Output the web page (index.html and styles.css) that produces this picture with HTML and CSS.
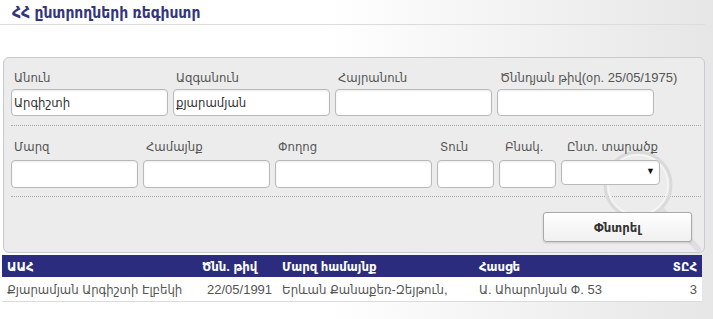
FILE: index.html
```html
<!DOCTYPE html>
<html lang="hy">
<head>
    <meta charset="UTF-8">
    <meta name="viewport" content="width=device-width, initial-scale=1.0">
    <title>ՀՀ ընտրողների ռեգիստր</title>
    <link rel="stylesheet" href="styles.css">
</head>
<body>
    <!-- Title -->
    <div class="page-title">ՀՀ ընտրողների ռեգիստր</div>

    <!-- Search form -->
    <form class="search-panel" id="search-form">
        <svg class="magnifier" width="120" height="130" viewBox="0 0 120 130">
            <circle cx="40" cy="40" r="33" fill="none" stroke="#dadada" stroke-width="3"/>
            <circle cx="40" cy="40" r="30" fill="none" stroke="#f6f6f6" stroke-width="1.5"/>
            <line x1="64" y1="65" x2="100" y2="104" stroke="#dedede" stroke-width="6" stroke-linecap="round"/>
        </svg>

        <div class="field-row">
            <div class="field w157">
                <label for="firstName">Անուն</label>
                <input type="text" id="firstName" value="Արգիշտի">
            </div>
            <div class="field w157">
                <label for="lastName">Ազգանուն</label>
                <input type="text" id="lastName" value="քյարամյան">
            </div>
            <div class="field w157">
                <label for="middleName">Հայրանուն</label>
                <input type="text" id="middleName">
            </div>
            <div class="field w157">
                <label for="birthDate">Ծննդյան թիվ(օր. 25/05/1975)</label>
                <input type="text" id="birthDate">
            </div>
        </div>

        <div class="field-row second">
            <div class="field w127">
                <label for="region">Մարզ</label>
                <input type="text" id="region">
            </div>
            <div class="field w127">
                <label for="community">Համայնք</label>
                <input type="text" id="community">
            </div>
            <div class="field w157">
                <label for="street">Փողոց</label>
                <input type="text" id="street">
            </div>
            <div class="field w57 house">
                <label for="house">Տուն</label>
                <input type="text" id="house">
            </div>
            <div class="field w57 shifted">
                <label for="apartment">Բնակ.</label>
                <input type="text" id="apartment">
            </div>
            <div class="field w99 shifted">
                <label for="district">Ընտ. տարածք</label>
                <div class="select-wrap">
                    <select id="district">
                        <option value=""></option>
                    </select>
                </div>
            </div>
        </div>

        <div class="actions">
            <button type="submit">Փնտրել</button>
        </div>
    </form>

    <!-- Results -->
    <table class="results">
        <colgroup>
            <col class="c-name">
            <col class="c-date">
            <col class="c-region">
            <col class="c-address">
            <col>
        </colgroup>
        <thead>
            <tr>
                <th>ԱԱՀ</th>
                <th>Ծնն. թիվ</th>
                <th>Մարզ համայնք</th>
                <th>Հասցե</th>
                <th class="num">ՏԸՀ</th>
            </tr>
        </thead>
        <tbody>
            <tr>
                <td>Քյարամյան Արգիշտի Էլբեկի</td>
                <td class="date">22/05/1991</td>
                <td>Երևան Քանաքեռ-Զեյթուն,</td>
                <td>Ա. Ահարոնյան Փ. 53</td>
                <td class="num">3</td>
            </tr>
        </tbody>
    </table>

    <script>
        document.getElementById("search-form").addEventListener("submit", function (event) {
            event.preventDefault();
        });
    </script>
</body>
</html>
```

FILE: styles.css
```css
body {
    font-family: "Liberation Sans", "DejaVu Sans Condensed", "DejaVu Sans", Arial, sans-serif;
    font-size: 13px;
    margin: 0;
    padding: 0;
    background: linear-gradient(to right, #ffffff 45%, #e6e6e6 100%);
    color: #555;
    height: 319px;
    overflow: hidden;
}

.page-title {
    color: #33357d;
    font-size: 15.5px;
    font-weight: bold;
    line-height: 17px;
    padding: 4px 12px 3px;
    margin-right: 8px;
    border-bottom: 1px solid #dcdcdc;
}

.search-panel {
    position: relative;
    margin: 32px 8px 0 3px;
    padding: 0 3px 10px 7px;
    background: #ececec;
    border: 1px solid #c9c9d3;
    border-radius: 6px;
}

.magnifier {
    position: absolute;
    left: 594px;
    top: 87px;
    pointer-events: none;
}

.field-row {
    display: flex;
    gap: 5px;
    padding: 12px 0 9px;
    border-bottom: 1px dotted #a8a8a8;
}

.field-row.second {
    padding: 13px 0 8px;
}

.field {
    position: relative;
    display: flex;
    flex-direction: column;
    gap: 3px;
}

.field-row.second .field {
    gap: 5px;
}

.field label {
    padding-left: 3px;
    line-height: 16px;
    white-space: nowrap;
}

.field input,
.field select {
    box-sizing: border-box;
    height: 27px;
    width: 100%;
    padding: 0 2px;
    font-family: inherit;
    font-size: 13px;
    color: #333;
    background: #fff;
    border: 1px solid #b9b9b9;
    border-radius: 4px;
    box-shadow: inset 0 1px 2px rgba(0, 0, 0, 0.08);
}

.field-row.second input {
    height: 28px;
}

.w157 { width: 157px; }
.w127 { width: 127px; }
.w57 { width: 57px; }
.w99 { width: 99px; }

.field.shifted label {
    padding-left: 6px;
}

.select-wrap {
    position: relative;
}

.field select {
    height: 25px;
    appearance: none;
    -webkit-appearance: none;
}

.select-wrap::after {
    content: "\25BC";
    position: absolute;
    right: 5px;
    top: 6px;
    font-size: 9px;
    color: #111;
    pointer-events: none;
}

.actions {
    display: flex;
    justify-content: flex-end;
    padding: 15px 9px 0 0;
}

.actions button {
    position: relative;
    width: 149px;
    height: 30px;
    font-family: inherit;
    font-size: 13px;
    font-weight: bold;
    color: #333;
    background: linear-gradient(to bottom, #ffffff, #f0f0f0);
    border: 1px solid #a9a9a9;
    border-radius: 3px;
    box-shadow: 0 1px 2px rgba(0, 0, 0, 0.15);
    cursor: pointer;
}

.results {
    width: 700px;
    margin: 2px 0 0 2px;
    border-collapse: collapse;
}

.c-name { width: 196px; }
.c-date { width: 80px; }
.c-region { width: 199px; }
.c-address { width: 200px; }

.results th {
    height: 22px;
    padding: 0 5px;
    text-align: left;
    color: #fff;
    font-weight: bold;
    background: #2b2c7d;
}

.results td {
    height: 24px;
    padding: 0 5px;
    color: #555;
    background: #fff;
    border-bottom: 1px solid #dcdcdc;
    white-space: nowrap;
}

.results td.date {
    padding-left: 10px;
}

.results .num {
    text-align: right;
}
```
